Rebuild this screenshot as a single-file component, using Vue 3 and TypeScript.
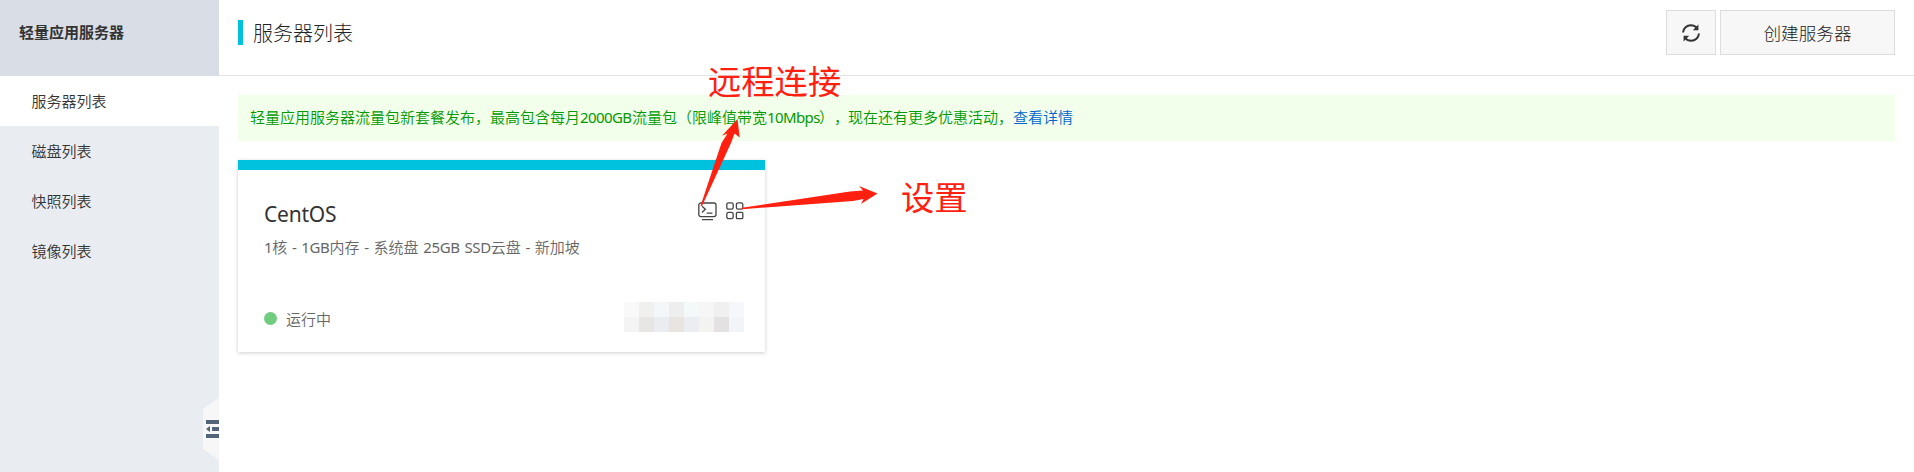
<script setup lang="ts">
interface MenuItem {
  label: string
  active: boolean
}

const menu: MenuItem[] = [
  { label: '服务器列表', active: true },
  { label: '磁盘列表', active: false },
  { label: '快照列表', active: false },
  { label: '镜像列表', active: false },
]

// Tones of the masked IP address, row by row
const mask: string[] = [
  '#f9f9f9', '#f0f0ee', '#f4f7fa', '#eeeeee', '#f5f8f8', '#f6f6f6', '#f0f0f1', '#f5f7fa',
  '#f4f4f4', '#e8e6e4', '#ebecef', '#e7e4e2', '#ebedf0', '#f3f3f2', '#e4e1e3', '#f2f4f7',
]
</script>

<template>
  <div class="app">
    <aside class="sidebar">
      <div class="product">轻量应用服务器</div>
      <nav>
        <a v-for="item in menu" :key="item.label" class="item" :class="{ active: item.active }">{{ item.label }}</a>
      </nav>
      <div class="collapse">
        <svg width="16" height="62" viewBox="0 0 16 62">
          <path d="M16 0L0 11V51L16 62Z" fill="#f7f7f7" />
          <path d="M3 22H16V26H3ZM9 29H16V33H9ZM3 36H16V40H3ZM7 28V34L3 31Z" fill="#546478" />
        </svg>
      </div>
    </aside>

    <main class="main">
      <header class="header">
        <h1>服务器列表</h1>
        <div class="actions">
          <button class="btn refresh" aria-label="刷新">
            <svg width="20" height="20" viewBox="0 0 20 20">
              <g fill="none" stroke="#333" stroke-width="2">
                <path d="M2 9.5C2.4 5.2 5.8 2.2 9.8 2.2C12.3 2.2 14.4 3.2 15.8 5" />
                <path d="M18 10.5C17.6 14.8 14.2 17.8 10.2 17.8C7.7 17.8 5.6 16.8 4.2 15" />
              </g>
              <path d="M17.4 1.6V7.2H11.8ZM2.6 18.4V12.8H8.2Z" fill="#333" />
            </svg>
          </button>
          <button class="btn create">创建服务器</button>
        </div>
      </header>

      <div class="notice">轻量应用服务器流量包新套餐发布，最高包含每月<span class="n1">2000GB</span>流量包（限峰值带宽<span class="n2">10Mbps</span>）<span class="comma">，</span>现在还有更多优惠活动，<a>查看详情</a></div>

      <section class="card">
        <div class="top">
          <h2>CentOS</h2>
          <div class="tools">
            <svg width="19" height="19" viewBox="0 0 19 19" fill="none" stroke="#444" stroke-width="1.3">
              <rect x="0.8" y="1" width="17.2" height="13.6" rx="2" />
              <path d="M4 4.2L7.4 7.3L4 10.4M8.6 11.2H14.4M4 17.6H15" />
            </svg>
            <svg width="18" height="18" viewBox="0 0 18 18" fill="none" stroke="#444" stroke-width="1.3">
              <rect x="0.8" y="0.8" width="6.4" height="6.4" rx="1.8" />
              <rect x="10.4" y="0.8" width="6.4" height="6.4" rx="1.8" />
              <rect x="0.8" y="10.3" width="6.4" height="6.4" rx="1.8" />
              <rect x="10.4" y="10.3" width="6.4" height="6.4" rx="1" />
            </svg>
          </div>
        </div>
        <p class="spec"><b>1</b>核<b> - 1GB</b>内存<b> - </b>系统盘<b> 25GB SSD</b>云盘<b> - </b>新加坡</p>
        <div class="bottom">
          <span class="dot"></span>
          <span class="state">运行中</span>
          <div class="mask">
            <i v-for="(tone, i) in mask" :key="i" :style="{ background: tone }"></i>
          </div>
        </div>
      </section>
    </main>

    <svg class="arrows" width="1914" height="472" viewBox="0 0 1914 472" fill="#ff2010">
      <path d="M737.5 119L739.7 137.5L734.5 133.5L731 143L702 206H700.5L721.5 143L727.5 133.5L722 135.8Z" />
      <path d="M877.5 193.5L861 204L863.5 199L853 201L742 209.2V207.8L850 191.5L863 190.5L859 186Z" />
    </svg>
    <span class="callout remote">远程连接</span>
    <span class="callout settings">设置</span>
  </div>
</template>

<style>
body {
  margin: 0;
  background: #fff;
}
</style>

<style scoped>
.app {
  position: relative;
  display: flex;
  width: 100%;
  height: 472px;
  overflow: hidden;
  font-family: "Noto Sans", "Noto Sans CJK SC", sans-serif;
  font-size: 15px;
  font-weight: 350;
  color: #333;
  text-spacing-trim: space-all;
}
.sidebar {
  position: relative;
  flex: none;
  width: 219px;
  background: #e9edf2;
}
.product {
  box-sizing: border-box;
  height: 76px;
  padding-left: 19px;
  line-height: 65px;
  font-weight: 700;
  background: #d9dee6;
}
.item {
  display: block;
  height: 50px;
  padding-left: 31.5px;
  line-height: 50px;
}
.item.active {
  background: #fff;
}
.collapse {
  position: absolute;
  right: 0;
  top: 398px;
  height: 62px;
}
.collapse svg {
  display: block;
}
.main {
  flex: 1;
  min-width: 0;
}
.header {
  box-sizing: border-box;
  display: flex;
  justify-content: space-between;
  align-items: flex-start;
  height: 76px;
  padding: 10px 19px 0;
  border-bottom: 1px solid #e1e3e6;
}
h1 {
  margin: 10px 0 0;
  padding-left: 10px;
  border-left: 5px solid #00c1de;
  height: 25px;
  line-height: 27px;
  font-size: 20px;
  font-weight: 300;
  color: #222;
}
.actions {
  display: flex;
  gap: 4px;
}
.btn {
  box-sizing: border-box;
  height: 45px;
  padding: 0;
  border: 1px solid #ddd;
  background: #f7f7f7;
  font-family: inherit;
  font-size: 17.6px;
  font-weight: 300;
  color: #222;
}
.refresh {
  display: flex;
  align-items: center;
  justify-content: center;
  width: 50px;
}
.create {
  width: 175px;
  line-height: 45px;
}
.notice {
  margin: 19px 19px 0;
  height: 46px;
  padding-left: 12px;
  line-height: 44px;
  white-space: nowrap;
  background: #f2ffea;
  color: #090;
}
.notice a {
  color: #06c;
}
.n1,
.n2,
.comma {
  display: inline-block;
}
.n1,
.n2 {
  width: 52px;
  font-weight: 400;
  letter-spacing: -0.6px;
}
.comma {
  width: 14px;
}
.card {
  box-sizing: border-box;
  width: 527px;
  height: 192px;
  margin: 19px 0 0 19px;
  padding: 29px 21px 0 26px;
  border-top: 10px solid #00c1de;
  background: #fff;
  box-shadow: 0 1px 4px rgba(0, 0, 0, 0.2);
}
.top {
  display: flex;
  justify-content: space-between;
  height: 30px;
}
h2 {
  margin: 0;
  font-size: 21px;
  line-height: 30px;
  font-weight: 400;
  letter-spacing: -0.2px;
}
.tools {
  display: flex;
  gap: 9px;
  padding-top: 3px;
}
.spec {
  margin: 6px 0 0;
  line-height: 24px;
  color: #666;
  white-space: pre;
}
.spec b {
  font-weight: 400;
  letter-spacing: -0.35px;
  word-spacing: 1.2px;
}
.bottom {
  display: flex;
  align-items: center;
  height: 30px;
  margin-top: 43px;
  color: #666;
}
.dot {
  width: 13px;
  height: 13px;
  margin-top: 2px;
  border-radius: 50%;
  background: #70cc7f;
}
.state {
  margin: 3px 0 0 9px;
}
.mask {
  display: grid;
  grid-template-columns: repeat(8, 15px);
  grid-auto-rows: 15px;
  margin-left: auto;
}
.arrows {
  position: absolute;
  left: 0;
  top: 0;
}
.callout {
  position: absolute;
  color: #ff2010;
  font-size: 33.3px;
  font-weight: 400;
  line-height: 40px;
  white-space: nowrap;
}
.remote {
  left: 708px;
  top: 61px;
}
.settings {
  left: 901px;
  top: 177px;
}
</style>
